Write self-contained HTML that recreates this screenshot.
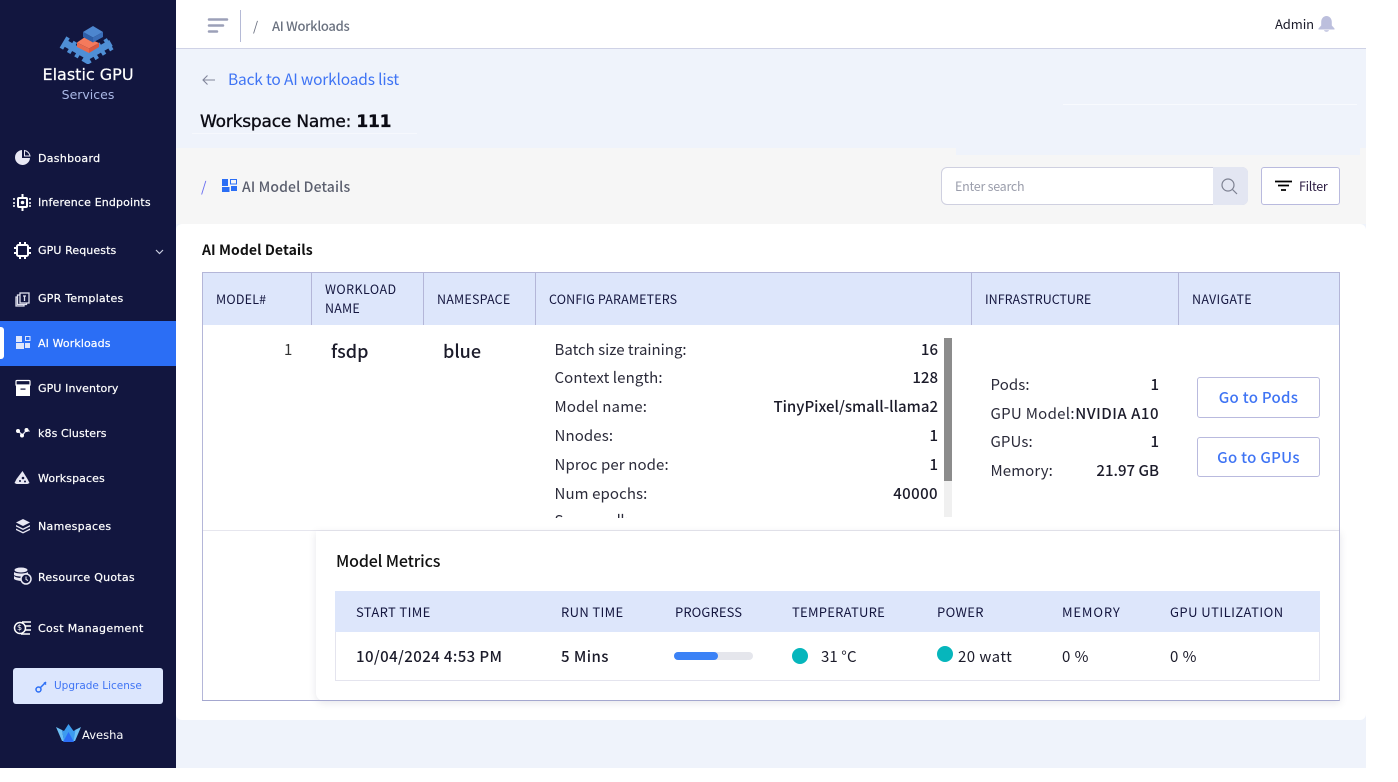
<!DOCTYPE html>
<html><head><meta charset="utf-8"><style>
html,body{margin:0;padding:0;width:1398px;height:782px;background:#fff;overflow:hidden}
body{position:relative;font-family:"Noto Sans CJK JP","Liberation Sans",sans-serif;color:#1b1b2a}
div,svg,span.a{position:absolute}
.t{position:absolute;white-space:nowrap;line-height:20px;height:20px}
.r{text-align:right}
.n{font-family:"DejaVu Sans",sans-serif;font-size:11px;color:#fff;left:38px;letter-spacing:.1px;-webkit-text-stroke:.2px #fff}
.h{font-size:12.5px;color:#14163f;letter-spacing:.2px}
.m{font-size:13px;color:#14163f;letter-spacing:.35px}
.l{font-size:15px;color:#2b2b3a;left:554.5px;letter-spacing:.1px}
.v{font-size:15px;color:#1b1b2a;font-weight:500;right:460px;letter-spacing:0}
.i{font-size:15px;color:#2b2b3a;left:990.5px;letter-spacing:.1px}
.w{font-size:15px;color:#1b1b2a;font-weight:500;right:239px;letter-spacing:0}
.d{font-size:15px;color:#1b1b2a;letter-spacing:.45px}
.b{background:#fff;border:1px solid #b9bade;border-radius:3px;box-sizing:border-box}
</style></head><body>
<div style="left:176px;top:0;width:1190px;height:768px;background:#eff3fb"></div>
<div style="left:176px;top:0;width:1190px;height:48px;background:#fff;border-bottom:1px solid #cfd2e6"></div>
<div style="left:176px;top:148px;width:1190px;height:76px;background:#f6f6f6"></div>
<div style="left:956px;top:148px;width:404px;height:7px;background:#eff3fb"></div>
<div style="left:176px;top:224px;width:1190px;height:496px;background:#fff;border-radius:6px 6px 6px 6px"></div>
<div style="left:1063px;top:104px;width:294px;height:1px;background:#f8fafe"></div>
<div style="left:192px;top:133px;width:225px;height:1px;background:#f6f8fd"></div>

<!-- sidebar -->
<div style="left:0;top:0;width:176px;height:768px;background:#12163f"></div>
<svg style="left:58px;top:24px" width="60" height="40" viewBox="0 0 60 40">
<path d="M7 19L30 32 53 19" fill="none" stroke="#4f8fd6" stroke-width="7"/>
<path d="M5 18L30 33 55 18" fill="none" stroke="#4f8fd6" stroke-width="13" stroke-dasharray="4 4.500"/>
<path d="M27 13l14 6-10 5.500-12-6z" fill="#f47a5c"/><path d="M19 18.500v4.500l12 6v-4.500z" fill="#e8694d"/><path d="M41 19v4l-10 6v-4.500z" fill="#d9573f"/>
<path d="M35 2l10 6-10 5.500-10-5.500z" fill="#4d86cf"/><path d="M25 8v5l10 5.500v-5z" fill="#2e5ea8"/><path d="M45 8v5l-10 5.500v-5z" fill="#3a6db8"/>
</svg>
<div class="t" style="left:0;width:176px;text-align:center;top:65px;font:16px/20px 'DejaVu Sans',sans-serif;color:#fff;-webkit-text-stroke:.2px #fff">Elastic GPU</div>
<div class="t" style="left:0;width:176px;text-align:center;top:85px;font:12.500px/20px 'DejaVu Sans',sans-serif;color:#aab8e6">Services</div>
<div style="left:0;top:321px;width:176px;height:45px;background:#2b6ef5"></div>
<div style="left:0;top:327px;width:4px;height:32px;background:#fff;border-radius:0 3px 3px 0"></div>

<div class="t n" style="top:149px;letter-spacing:.3px">Dashboard</div>
<div class="t n" style="top:193px;letter-spacing:.15px">Inference Endpoints</div>
<div class="t n" style="top:241px">GPU Requests</div>
<div class="t n" style="top:289px;letter-spacing:.25px">GPR Templates</div>
<div class="t n" style="top:334px">AI Workloads</div>
<div class="t n" style="top:379px">GPU Inventory</div>
<div class="t n" style="top:424px">k8s Clusters</div>
<div class="t n" style="top:469px">Workspaces</div>
<div class="t n" style="top:517px;letter-spacing:.3px">Namespaces</div>
<div class="t n" style="top:568px;letter-spacing:.25px">Resource Quotas</div>
<div class="t n" style="top:619px;letter-spacing:.35px">Cost Management</div>

<svg style="left:0;top:0" width="176" height="768" fill="#e8e8f4">
<path d="M22 150a7.500 7.500 0 1 0 8 8h-8z"/><path d="M24.500 150.500a6.500 6.500 0 0 1 5.500 5.500h-5.500z" fill="none" stroke="#e8e8f4"/>
<g fill="none" stroke="#fff" stroke-width="2"><rect x="18" y="198" width="9" height="9" rx="1"/><path d="M22.500 194v4M22.500 207v4"/><path d="M13 199h3M13 203h3M13 206h3M29 199h3M29 203h3M29 206h3" stroke-width="1.500" stroke-dasharray="2 1"/></g><circle cx="22.500" cy="202.500" r="1.800" fill="#fff"/>
<g fill="none" stroke="#fff" stroke-width="2"><rect x="17" y="245" width="11" height="11" rx="1.500"/><path d="M20 242v3M25 242v3M20 256v3M25 256v3M14 248h3M14 253h3M28 248h3M28 253h3"/></g>
<g fill="none" stroke="#dfe0ee" stroke-width="1.300"><rect x="20" y="293" width="9" height="10"/><path d="M20 295h-2.500v9.500h9V303M17.500 297h-1.500v9h8v-1.500"/><path d="M23 296h3M24.500 296v5"/></g>
<path d="M16 336h6v6h-6zM16 343h8v6h-8zM25 343h5v5h-5z" fill="#dfe6fb"/><rect x="25.500" y="336.500" width="4.500" height="4" fill="none" stroke="#dfe6fb"/>
<path d="M16 385v-3.500q0-1 1-1h12q1 0 1 1v3.500z" fill="none" stroke="#fff" stroke-width="1.200"/><path d="M16 385h14v11H16z" fill="#fff"/><rect x="20.500" y="388.500" width="5" height="1.200" fill="#12163f"/>
<g fill="none" stroke="#dfe0ee" stroke-width="1.300"><path d="M18 431l4.500 4 4.500-5.500 2.500 2"/></g><circle cx="18" cy="431" r="2" fill="#fff"/><circle cx="22" cy="435.500" r="2" fill="#fff"/><circle cx="26.500" cy="430" r="2" fill="#fff"/>
<path d="M22.500 471l5 8 2 4-2 1h-11l-2-1 2-4z" fill="#e8e8f4"/><circle cx="23" cy="478" r="1.300" fill="#12163f"/><circle cx="20" cy="481" r="1" fill="#12163f"/><circle cx="25" cy="481.500" r="1" fill="#12163f"/>
<path d="M23 519l7 3.500-7 3.500-7-3.500zM16 525l7 3.500 7-3.500v1.500l-7 3.500-7-3.500zM16 528.500l7 3.500 7-3.500v1.500l-7 3.500-7-3.500z" fill="#e8e8f4"/>
<g><ellipse cx="21" cy="570" rx="6.500" ry="2.500"/><path d="M14 572c2 2 12 2 14 0v3c-2 2-12 2-14 0zM14 576c2 2 7 2 9 2l-1 3c-3 0-7-1-8-2z"/><circle cx="26" cy="579" r="5" fill="#12163f" stroke="#e8e8f4" stroke-width="1.500"/><path d="M26 576.500v3l2 1" fill="none" stroke="#e8e8f4"/></g>
<g><circle cx="20" cy="628" r="5.500" fill="#12163f" stroke="#fff" stroke-width="1.500"/><path d="M22 622h9M25 626h6M25 630h6M21 634h9" stroke="#fff" stroke-width="1.500" fill="none"/></g>
</svg>
<div class="t" style="left:17px;top:620px;width:6px;font:8px/16px 'DejaVu Sans',sans-serif;color:#fff">$</div>
<svg style="left:155px;top:249px" width="9" height="6"><path d="M1 1l3.500 3.500L8 1" fill="none" stroke="#c9cde0" stroke-width="1.200"/></svg>

<div style="left:13px;top:668px;width:150px;height:36px;background:#dce6fd;border-radius:3px"></div>
<svg style="left:35px;top:680px" width="13" height="13"><circle cx="3.500" cy="9.500" r="2.500" fill="none" stroke="#2b6ef5" stroke-width="1.500"/><path d="M5.500 7.500L11 2M9 2.500l2 2" fill="none" stroke="#2b6ef5" stroke-width="1.500"/></svg>
<div class="t" style="left:54px;top:676px;font:10.500px/20px 'DejaVu Sans',sans-serif;color:#3f74f4">Upgrade License</div>
<svg style="left:56px;top:724px" width="25" height="20"><path d="M0 3l6 3 2 11H6z" fill="#6cc0f5"/><path d="M25 3l-6 3-2 11h2z" fill="#6cc0f5"/><path d="M12.500 0l5 7 2-1-2 12H8L6 6l2 1z" fill="#3c9cf0"/><path d="M12.500 8L18 18H7z" fill="#2b6ef5"/></svg>
<div class="t" style="left:82px;top:725px;font:11.500px/20px 'DejaVu Sans',sans-serif;color:#fff">Avesha</div>

<!-- top -->
<svg style="left:206px;top:16px" width="24" height="20"><path d="M3 3.500h18M3 9.500h14M3 15.500h8" stroke="#9ca0b8" stroke-width="2.500" stroke-linecap="round"/></svg>
<div style="left:240px;top:10px;width:1px;height:32px;background:#b5bad6"></div>
<div class="t" style="left:253px;top:16px;font-size:13px;color:#6b7080">/</div>
<div class="t" style="left:272px;top:16px;font-size:13px;color:#6b7280;font-weight:500;letter-spacing:-.3px">AI Workloads</div>
<div class="t" style="left:1275px;top:14px;font-size:13px;color:#1b1b2a;letter-spacing:-.1px">Admin</div>
<svg style="left:1318px;top:15px" width="17" height="18"><path d="M8.500 1C5.500 1 3.200 3.500 3.200 7v3.500L0.500 13.500v1h16v-1L13.800 10.500V7C13.800 3.500 11.500 1 8.500 1zM6 15.200c.5 2 4.500 2 5 0z" fill="#bcbfdd"/></svg>

<svg style="left:201px;top:73px" width="15" height="14"><path d="M14 7H2M6.500 2.500L2 7l4.500 4.500" fill="none" stroke="#80859a" stroke-width="1.100"/></svg>
<div class="t" style="left:228px;top:69px;font-size:15.500px;color:#3f74f4;letter-spacing:-.17px">Back to AI workloads list</div>
<div class="t" style="left:200px;top:112px;font:17px/20px 'DejaVu Sans',sans-serif;color:#0b0b14;-webkit-text-stroke:.35px #0b0b14;letter-spacing:-.2px">Workspace Name: <b>111</b></div>

<!-- section -->
<div class="t" style="left:201px;top:177px;font-size:14px;color:#6a6ff0">/</div>
<svg style="left:222px;top:179px" width="15" height="13"><path d="M0 0h6v7H0zM0 8h7.500v5H0zM9 7h6v5H9z" fill="#2b6ef5"/><rect x="8.500" y="0.500" width="6" height="4.500" fill="none" stroke="#2b6ef5"/></svg>
<div class="t" style="left:242px;top:177px;font-size:14px;color:#5b5f6e;font-weight:500;letter-spacing:.13px">AI Model Details</div>

<div style="left:941px;top:167px;width:307px;height:38px;background:#fff;border:1px solid #cfd0e0;border-radius:6px;box-sizing:border-box"></div>
<div style="left:1213px;top:167px;width:35px;height:38px;background:#e3e6f2;border-radius:0 6px 6px 0"></div>
<div class="t" style="left:955px;top:176px;font-size:12.500px;color:#9a9dab;letter-spacing:-.25px">Enter search</div>
<svg style="left:1220px;top:177px" width="18" height="18"><circle cx="8" cy="8" r="6" fill="none" stroke="#7d8191" stroke-width="1.200"/><path d="M12.500 12.500L17 17" stroke="#7d8191" stroke-width="1.200"/></svg>
<div class="b" style="left:1261px;top:167px;width:79px;height:38px"></div>
<svg style="left:1275px;top:180px" width="18" height="12"><path d="M0 1.500h17M3 5.500h11M6 10h5" stroke="#000" stroke-width="1.700"/></svg>
<div class="t" style="left:1299px;top:176px;font-size:12.500px;color:#2a1a40;letter-spacing:-.3px">Filter</div>

<div class="t" style="left:202px;top:240px;font-size:14px;font-weight:700;color:#111;letter-spacing:.07px">AI Model Details</div>

<!-- table -->
<div style="left:202px;top:272px;width:1138px;height:429px;border:1px solid #b4b6d8;box-sizing:border-box;background:#fff"></div>
<div style="left:203px;top:273px;width:1136px;height:52px;background:#dde6fb"></div>
<div style="left:311px;top:273px;width:1px;height:52px;background:#b4b6d8"></div>
<div style="left:423px;top:273px;width:1px;height:52px;background:#b4b6d8"></div>
<div style="left:535px;top:273px;width:1px;height:52px;background:#b4b6d8"></div>
<div style="left:971px;top:273px;width:1px;height:52px;background:#b4b6d8"></div>
<div style="left:1178px;top:273px;width:1px;height:52px;background:#b4b6d8"></div>
<div class="t h" style="left:216px;top:289px">MODEL#</div>
<div class="t h" style="left:325px;top:279px;letter-spacing:.45px">WORKLOAD</div>
<div class="t h" style="left:325px;top:298px">NAME</div>
<div class="t h" style="left:437px;top:289px">NAMESPACE</div>
<div class="t h" style="left:549px;top:289px;letter-spacing:.15px">CONFIG PARAMETERS</div>
<div class="t h" style="left:985px;top:289px;letter-spacing:0">INFRASTRUCTURE</div>
<div class="t h" style="left:1192px;top:289px;letter-spacing:.3px">NAVIGATE</div>

<div class="t" style="left:284px;top:340px;font-size:15px;color:#333">1</div>
<div class="t" style="left:331px;top:341px;font-size:18px;font-weight:500;color:#1b1b2a">fsdp</div>
<div class="t" style="left:443px;top:341px;font-size:18px;font-weight:500;color:#1b1b2a">blue</div>

<div class="t l" style="top:340px;letter-spacing:0">Batch size training:</div><div class="t v" style="top:340px">16</div>
<div class="t l" style="top:368px">Context length:</div><div class="t v" style="top:368px">128</div>
<div class="t l" style="top:397px;letter-spacing:.2px">Model name:</div><div class="t v" style="top:397px">TinyPixel/small-llama2</div>
<div class="t l" style="top:426px">Nnodes:</div><div class="t v" style="top:426px">1</div>
<div class="t l" style="top:455px">Nproc per node:</div><div class="t v" style="top:455px">1</div>
<div class="t l" style="top:484px">Num epochs:</div><div class="t v" style="top:484px;letter-spacing:.4px">40000</div>
<div style="left:554.5px;top:505px;width:110px;height:13px;overflow:hidden"><div class="t l" style="left:0;top:6px;letter-spacing:-.5px">Save small:</div></div>
<div style="left:944px;top:338px;width:8px;height:179px;background:#f0f0f0"></div>
<div style="left:944px;top:338px;width:8px;height:143px;background:#8c8c8c"></div>

<div class="t i" style="top:375px">Pods:</div><div class="t w" style="top:375px">1</div>
<div class="t i" style="top:404px;letter-spacing:.3px">GPU Model:</div><div class="t w" style="top:404px;letter-spacing:.5px">NVIDIA A10</div>
<div class="t i" style="top:432px">GPUs:</div><div class="t w" style="top:432px">1</div>
<div class="t i" style="top:461px">Memory:</div><div class="t w" style="top:461px">21.97 GB</div>

<div class="b" style="left:1197px;top:377px;width:123px;height:41px"></div>
<div class="t" style="left:1197px;width:123px;text-align:center;top:388px;font-size:15px;font-weight:500;color:#3f74f4;letter-spacing:.3px">Go to Pods</div>
<div class="b" style="left:1197px;top:437px;width:123px;height:40px"></div>
<div class="t" style="left:1197px;width:123px;text-align:center;top:448px;font-size:15px;font-weight:500;color:#3f74f4;letter-spacing:.3px">Go to GPUs</div>

<div style="left:203px;top:530px;width:1136px;height:1px;background:#e6e6ee"></div>

<!-- metrics -->
<div style="left:316px;top:531px;width:1024px;height:170px;background:#fff;border-radius:0 0 0 8px;box-shadow:0 2px 8px rgba(60,60,90,.13)"></div>
<div style="left:202px;top:700px;width:1138px;height:1px;background:#a4a7cf"></div>
<div style="left:1339px;top:531px;width:1px;height:170px;background:#b4b6d8"></div>
<div class="t" style="left:336px;top:550px;font-size:16px;font-weight:500;color:#111;letter-spacing:-.15px">Model Metrics</div>
<div style="left:335px;top:591px;width:985px;height:90px;border:1px solid #e4e4ee;box-sizing:border-box;background:#fff"></div>
<div style="left:335px;top:591px;width:985px;height:41px;background:#dde6fb"></div>
<div class="t m" style="left:356px;top:602px">START TIME</div>
<div class="t m" style="left:561px;top:602px">RUN TIME</div>
<div class="t m" style="left:675px;top:602px;letter-spacing:.1px">PROGRESS</div>
<div class="t m" style="left:792px;top:602px;letter-spacing:.25px">TEMPERATURE</div>
<div class="t m" style="left:937px;top:602px">POWER</div>
<div class="t m" style="left:1062px;top:602px;letter-spacing:.85px">MEMORY</div>
<div class="t m" style="left:1170px;top:602px;letter-spacing:.45px">GPU UTILIZATION</div>
<div class="t d" style="left:356px;top:647px;font-weight:500;letter-spacing:.4px">10/04/2024 4:53 PM</div>
<div class="t d" style="left:561px;top:647px;font-weight:500">5 Mins</div>
<div style="left:674px;top:652px;width:79px;height:8px;border-radius:4px;background:#e5e6ec"></div>
<div style="left:674px;top:652px;width:44px;height:8px;border-radius:4px;background:#3b82f6"></div>
<div style="left:792px;top:648px;width:16px;height:16px;border-radius:50%;background:#06b6bc"></div>
<div class="t d" style="left:821px;top:647px;letter-spacing:.1px">31 °C</div>
<div style="left:937px;top:646px;width:16px;height:16px;border-radius:50%;background:#06b6bc"></div>
<div class="t d" style="left:958px;top:647px">20 watt</div>
<div class="t d" style="left:1062px;top:647px">0 %</div>
<div class="t d" style="left:1170px;top:647px">0 %</div>
</body></html>
